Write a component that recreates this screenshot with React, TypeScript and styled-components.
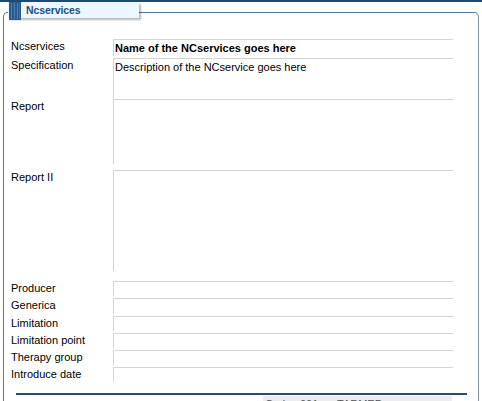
import React from "react";
import styled, { createGlobalStyle } from "styled-components";

const Global = createGlobalStyle`
  html, body { margin: 0; padding: 0; background: #ffffff; }
  body { font-family: "Liberation Sans", Arial, sans-serif; font-size: 11px; color: #000; overflow: hidden; }
`;

const Page = styled.div`
  width: 482px;
  height: 401px;
  overflow: hidden;
`;

const TopBar = styled.div`
  height: 2px;
  background: #1c4a78;
`;

const Group = styled.fieldset`
  margin: 0 3px 0 3px;
  padding: 0 24px 0 7px;
  height: 420px;
  border: 1px solid #4f7ba6;
  border-right-color: #8294ae;
  border-bottom: none;
  border-radius: 5px 5px 0 0;
  box-sizing: border-box;
  min-width: 0;
`;

const Legend = styled.legend`
  margin-left: -3px;
  padding: 0;
  height: 21px;
`;

const Tab = styled.div`
  display: flex;
  align-items: center;
  gap: 5px;
  height: 16px;
  width: 131px;
  box-sizing: border-box;
  padding-left: 1px;
  background: #eef7fd;
  box-shadow: 2px 2px 2px rgba(0, 0, 0, 0.28);
`;

const TabTitle = styled.span`
  font-weight: bold;
  font-size: 10.5px;
  letter-spacing: -0.1px;
  color: #1d4f80;
`;

const Form = styled.div`
  display: flex;
  flex-direction: column;
  padding-top: 16px;
`;

const Row = styled.div<{ $gap: number; $h: number }>`
  display: flex;
  align-items: flex-start;
  height: ${(p) => p.$h}px;
  margin-bottom: ${(p) => p.$gap}px;
`;

const Label = styled.div`
  width: 102px;
  flex: none;
  line-height: 15px;
  white-space: nowrap;
`;

const Field = styled.div<{ $h: number; $bold?: boolean }>`
  width: 340px;
  height: ${(p) => p.$h}px;
  box-sizing: border-box;
  border-top: 1px solid #d4d4d4;
  border-left: 1px solid #d4d4d4;
  padding: 1px 0 0 1px;
  line-height: 14px;
  font-weight: ${(p) => (p.$bold ? "bold" : "normal")};
`;

const Footer = styled.div`
  margin-top: 11px;
  margin-left: 5px;
  width: 451px;
`;

const FooterLine = styled.div`
  height: 2px;
  background: #1d4e7c;
`;

const CodeBox = styled.div`
  margin-top: 1px;
  margin-left: 247px;
  width: 189px;
  height: 20px;
  background: #ededed;
  color: #555;
  padding-left: 2px;
  box-sizing: border-box;
  line-height: 14px;
  padding-top: 1px;
  display: flex;
`;

const CodeItem = styled.span<{ $w: number }>`
  width: ${(p) => p.$w}px;
  flex: none;
`;

const Icon = () => (
  <svg width="12" height="18" viewBox="0 0 12 18" style={{ marginTop: 2 }}>
    <rect x="0" y="0" width="12" height="18" fill="#2b5b8a" />
    <rect x="2" y="1" width="1" height="16" fill="#4f7fae" />
    <rect x="5" y="1" width="1" height="16" fill="#4f7fae" />
    <rect x="8" y="1" width="1" height="16" fill="#4f7fae" />
    <rect x="10" y="1" width="1" height="16" fill="#3e6e9e" />
  </svg>
);

const rows: { label: string; h: number; gap: number; value?: string; bold?: boolean }[] = [
  { label: "Ncservices", h: 17, gap: 2, value: "Name of the NCservices goes here", bold: true },
  { label: "Specification", h: 40, gap: 1, value: "Description of the NCservice goes here" },
  { label: "Report", h: 65, gap: 6 },
  { label: "Report II", h: 101, gap: 10 },
  { label: "Producer", h: 15, gap: 2 },
  { label: "Generica", h: 16, gap: 2 },
  { label: "Limitation", h: 15, gap: 2 },
  { label: "Limitation point", h: 15, gap: 2 },
  { label: "Therapy group", h: 15, gap: 2 },
  { label: "Introduce date", h: 15, gap: 0 },
];

export default function App() {
  return (
    <Page>
      <Global />
      <TopBar />
      <Group>
        <Legend>
          <Tab>
            <Icon />
            <TabTitle>Ncservices</TabTitle>
          </Tab>
        </Legend>
        <Form>
          {rows.map((r) => (
            <Row key={r.label} $gap={r.gap} $h={r.h}>
              <Label>{r.label}</Label>
              <Field $h={r.h} $bold={r.bold}>
                {r.value}
              </Field>
            </Row>
          ))}
        </Form>
        <Footer>
          <FooterLine />
          <CodeBox>
            <CodeItem $w={35}>Code:</CodeItem>
            <CodeItem $w={37}>001</CodeItem>
            <CodeItem $w={60}>TARMED</CodeItem>
          </CodeBox>
        </Footer>
      </Group>
    </Page>
  );
}
